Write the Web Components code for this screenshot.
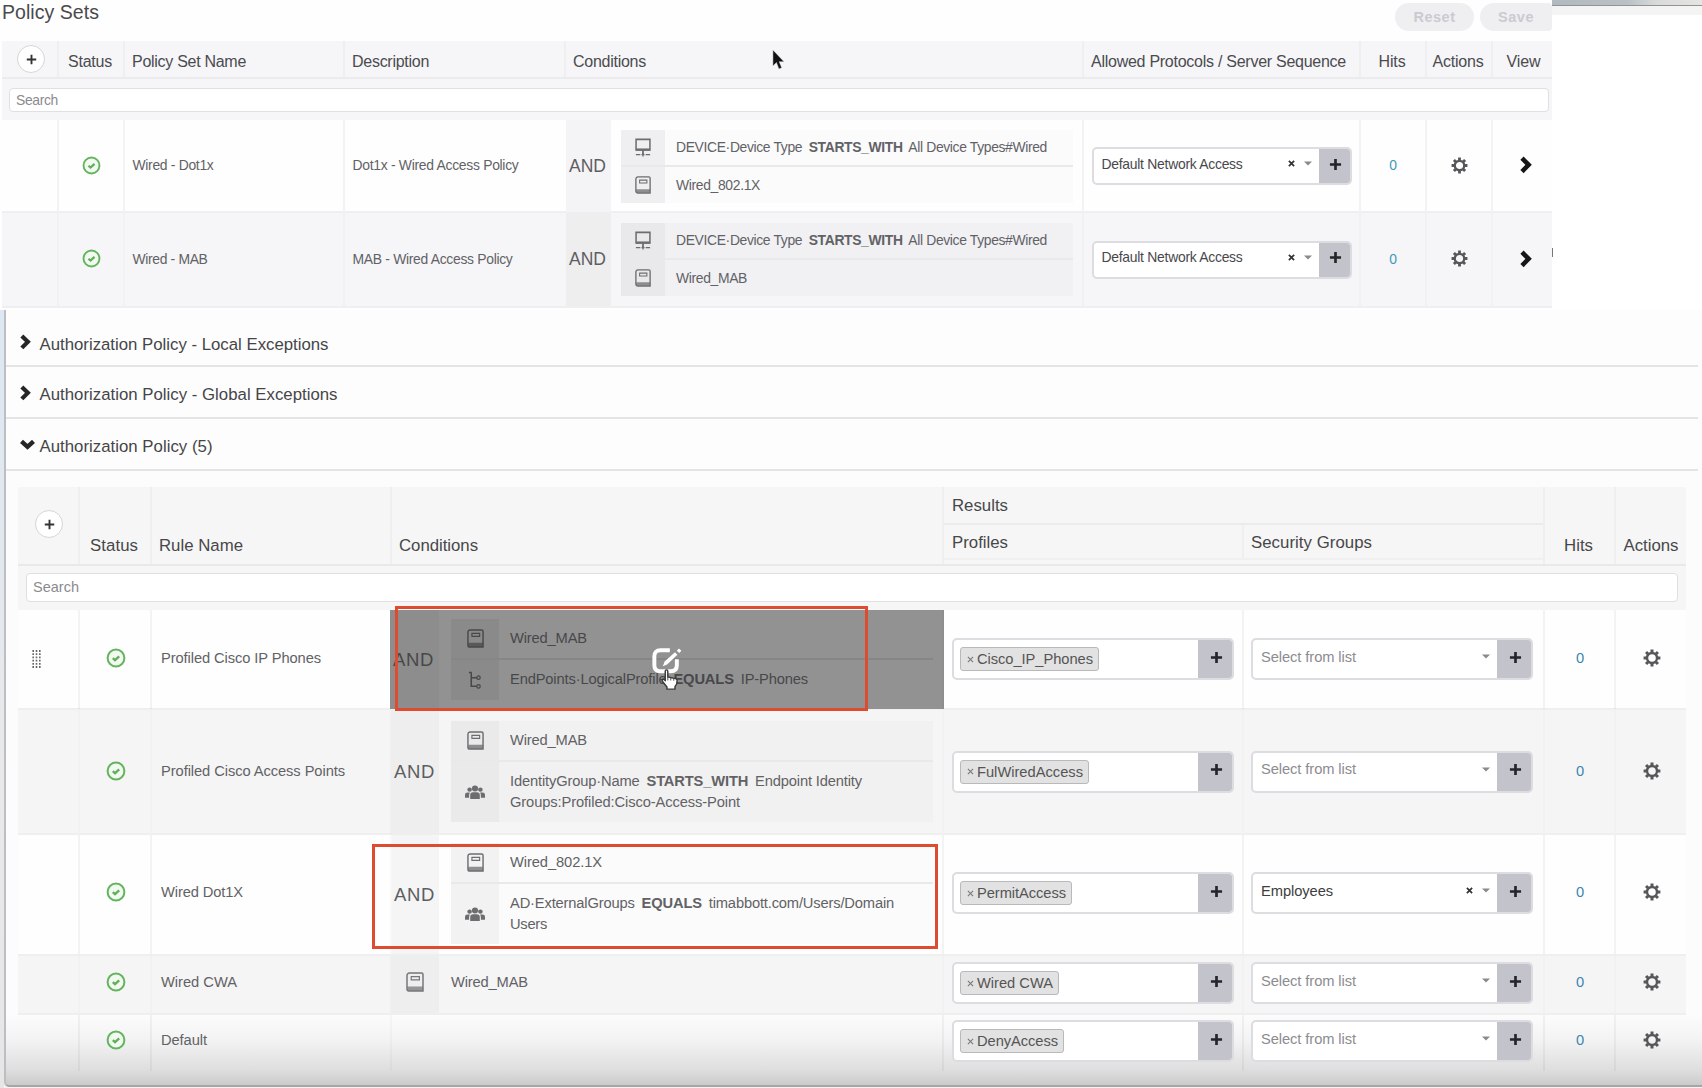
<!DOCTYPE html>
<html lang="en">
<head>
<meta charset="utf-8">
<title>Policy Sets</title>
<style>
html,body{margin:0;padding:0;background:#fff}
body{width:1702px;height:1088px;overflow:hidden;font-family:"Liberation Sans",Arial,sans-serif}
</style>
</head>
<body>
<policy-page></policy-page>
<script>
const fits = [];
const define = (name, render) => customElements.define(name, class extends HTMLElement {
  constructor() { super(); this.attachShadow({ mode: 'open' }); }
  connectedCallback() { if (!this.done) { this.done = true; this.shadowRoot.innerHTML = render(this); } }
});

/* Text whose tracking is adjusted to a given width in pixels */
customElements.define('fit-text', class extends HTMLElement {
  constructor() {
    super();
    this.attachShadow({ mode: 'open' }).innerHTML =
      '<style>:host{display:inline-block;white-space:pre;flex:none}::slotted(b){margin:0 3px}</style><slot></slot>';
  }
  connectedCallback() { fits.push(this); }
  fit() {
    const w = +this.getAttribute('w');
    if (w) this.style.letterSpacing = ((w - this.getBoundingClientRect().width) / this.textContent.length) + 'px';
  }
});
const F = (t, w) => `<fit-text w="${w}">${t}</fit-text>`;

const glyphs = {
  check: ['0 0 20 20', '<circle cx="10" cy="10" r="8.4" fill="#f1faef" stroke="#66b35f" stroke-width="2"/><path d="M6.8 10.2l2.2 2 4.2-3.900" fill="none" stroke="#66ab5f" stroke-width="2.300"/>'],
  gear: ['0 0 18 18', '<g fill="none" stroke="#56575a"><circle cx="9" cy="9" r="5" stroke-width="2.4"/><g stroke-width="3"><path d="M9 .6v2.8M9 14.6v2.8M.6 9h2.8M14.6 9h2.8M3.06 3.06l2 2M12.94 12.94l2 2M3.06 14.94l2-2M12.94 5.06l2-2"/></g></g>'],
  right: ['0 0 12 18', '<path d="M2 2.2l6.6 6.6L2 15.6" fill="none" stroke="currentColor" stroke-width="4.6"/>'],
  down: ['0 0 16 12', '<path d="M1.6 2.6l6.4 6L14.4 2.6" fill="none" stroke="currentColor" stroke-width="4.6"/>'],
  book: ['0 0 18 20', '<path d="M3.4 1h12.1a1.5 1.5 0 0 1 1.5 1.5V19H3a2 2 0 0 1-2-2V3.4A2.4 2.4 0 0 1 3.4 1z" fill="none" stroke="currentColor" stroke-width="1.5"/><path d="M1.5 14.6H17V19H3a2 2 0 0 1-2-2z" fill="currentColor" opacity=".75"/><path d="M5.2 4.6h8.2v3.2H5.2z" fill="none" stroke="currentColor" stroke-width="1.2"/>'],
  device: ['0 0 18 20', '<path d="M1.2 1.5h15.6v11H1.2z" fill="none" stroke="currentColor" stroke-width="1.7"/><path d="M1 11h16v2.3H1z" fill="currentColor"/><path d="M9 13v4" stroke="currentColor" stroke-width="2"/><path d="M1 17.5h5M7.3 17.5h3.4M12 17.5h5M9 16v3.6" stroke="currentColor" stroke-width="1.5"/>'],
  tree: ['0 0 18 20', '<path d="M2 1.5h3M4.5 1.5v14.5h6M4.5 7h6" fill="none" stroke="currentColor" stroke-width="1.6"/><circle cx="12.2" cy="7" r="1.8" fill="none" stroke="currentColor" stroke-width="1.3"/><circle cx="12.2" cy="16.2" r="1.8" fill="none" stroke="currentColor" stroke-width="1.3"/>'],
  people: ['0 0 20 16', '<g fill="currentColor"><circle cx="10" cy="3.7" r="3.1"/><circle cx="4.6" cy="5" r="2.3"/><circle cx="15.4" cy="5" r="2.3"/><path d="M5.2 15V10.600q0-3 3-3h3.600q3 0 3 3V15z"/><path d="M0 13.500v-3q0-2.500 2.500-2.500h2.400q-1 1.200-.8 5.500zM20 13.500v-3q0-2.500-2.500-2.500h-2.400q1 1.200.8 5.500z"/></g>'],
  plus: ['0 0 14 14', '<path d="M7 1v12M1 7h12" stroke="currentColor" stroke-width="var(--sw,2.900)"/>'],
  x: ['0 0 8 8', '<path d="M1 1l6 6M7 1L1 7" stroke="currentColor" stroke-width="var(--sw,2)"/>'],
  caret: ['0 0 8 6', '<path d="M0 .5h8L4 5.500z" fill="currentColor"/>'],
  drag: ['0 0 9 19', '<path d="M1.200 0v19M4.500 0v19M7.800 0v19" stroke="#666" stroke-width="1.600" stroke-dasharray="2 1.400"/>'],
  edit: ['0 0 32 30', '<path d="M19 2.500H9Q2.500 2.500 2.500 9v9.500Q2.500 25 9 25h11q6.500 0 6.500-6.500V12" fill="none" stroke="#fff" stroke-width="4.200"/><path d="M11.500 19.500l2-5L24.500 4.500l2.600 2.700-11 10.500z" fill="#fff"/><path d="M27.600 1.800l2.600 2.400" stroke="#fff" stroke-width="3.400"/>'],
  hand: ['0 0 20 24', '<path d="M5 2.500Q5 1 6.500 1T8 2.500V9l9 2q2 .5 2 2.500 0 4-2.500 6.500V23H7v-2.500L1.600 14Q.8 12 2.500 11.500L5 13z" fill="#fff" stroke="#3a3a3a" stroke-width="1.700"/><path d="M8 9v4M11.500 10v3M15 11v2.500" stroke="#555" stroke-width="1.200"/>'],
  arrow: ['0 0 13 20', '<path d="M1 0v16l3.800-3.500L7.500 19l3-1.300-2.700-6H13z" fill="#111" stroke="#ddd" stroke-width=".5"/>']
};
define('ui-icon', el => {
  const [box, body] = glyphs[el.getAttribute('name')];
  return `<style>:host{display:block;flex:none}svg{display:block;width:100%;height:100%;overflow:visible}</style>
  <svg viewBox="${box}" preserveAspectRatio="none">${body}</svg>`;
});
const I = (n, w, h, extra = '') => `<ui-icon name="${n}" style="width:${w}px;height:${h}px;${extra}"></ui-icon>`;

define('add-circle', () => `<style>:host{display:flex;width:26px;height:26px;border:1.500px solid #d6d6d8;border-radius:50%;background:#fff;color:#333;align-items:center;justify-content:center;--sw:2.400}</style>${I('plus', 11, 11)}`);

define('search-box', el => `<style>:host{display:flex;box-sizing:border-box;align-items:center;background:#fff;border:1.500px solid #e0e0e4;border-radius:4px;color:#8b8b8f}</style><slot></slot>`);

define('pill-button', () => `<style>:host{display:flex;align-items:center;justify-content:center;height:28px;border-radius:14px;background:#efeff2;color:#cbcbcf;font:bold 14.500px "Liberation Sans",Arial,sans-serif}</style><slot></slot>`);

/* Drop-down field with an add button at its end */
define('pick-field', el => {
  const chip = el.hasAttribute('chip'), clear = el.hasAttribute('clear');
  return `<style>
  :host{display:flex;box-sizing:border-box;border:2px solid #dcdce1;border-radius:5px;background:#fff;overflow:hidden}
  .v{flex:1;display:flex;align-items:center;padding:0 7px 5px 8px}
  .v.c{padding:0 0 0 6px}
  .sp{flex:1}
  .chip{box-sizing:border-box;height:24px;display:flex;align-items:center;gap:3px;padding:0 5px 0 6px;border:1.500px solid #b9b9bb;border-radius:3px;background:#e2e2e2;color:#555;--sw:1.200}
  .add{box-sizing:border-box;width:var(--add,34px);background:#c3c3cb;display:flex;align-items:center;justify-content:center;color:#25252a;padding:0 0 4px 1px;margin:-2px -2px -2px 0}
  </style>
  ${chip ? `<div class="v c"><div class="chip">${I('x', 7, 7, 'color:#777')}<slot></slot></div></div>`
  : `<div class="v"><slot></slot><span class="sp"></span>${clear ? I('x', 7, 7, 'color:#333;margin-right:9px') : ''}${I('caret', 8, 5, 'color:#8a8a8d')}</div>`}
  <div class="add">${I('plus', 13, 13)}</div>`;
});

/* AND-joined condition block */
define('cond-line', el => `<style>
  :host{display:flex;box-sizing:border-box}
  .i{width:var(--iw);background:var(--ic);display:flex;align-items:center;justify-content:center;color:var(--fg,#6d6d70)}
  .t{flex:1;display:flex;flex-direction:column;justify-content:center;align-items:flex-start;padding:0 0 1px 11px;line-height:var(--lh,20px);background:var(--bc)}
  </style><div class="i">${I(el.getAttribute('icon'), +el.getAttribute('iw') || 17, +el.getAttribute('ih') || 19)}</div><div class="t"><slot></slot></div>`);
define('cond-group', el => `<style>
  :host{display:flex;height:100%;width:100%}
  .and{width:var(--aw);background:var(--ac);display:flex;align-items:center;justify-content:center;font-size:var(--as,17.500px);color:var(--fg,#5e5e61);box-sizing:border-box;padding-right:2px}
  .b{flex:1;display:flex;flex-direction:column;margin:var(--m)}
  ::slotted(cond-line:first-of-type){border-bottom:2px solid var(--dv,#e9e9eb)}
  </style><div class="and"><fit-text w="${el.getAttribute('w')}">AND</fit-text></div><div class="b"><slot></slot></div>`);

define('section-bar', el => `<style>
  :host{display:flex;box-sizing:border-box;border-bottom:2px solid #e4e4e6;align-items:center;font-size:16.800px;color:#454548;background:#fdfdfd;padding:6px 0 0 14px}
  .i{width:19.500px;color:#262628}
  </style><div class="i">${el.hasAttribute('open') ? I('down', 15, 11, 'margin-top:-5px') : I('right', 11, 16, 'margin-top:-5px')}</div><slot></slot>`);

const topRow = (bg, h, name, nw, desc, dw, cond, cw, alt) => `
<div class="row ${alt}" style="height:${h}px;background:${bg}">
 <div class="c"></div><div class="c mid">${I('check', 19, 19)}</div>
 <div class="c p8">${F(name, nw)}</div><div class="c p8">${F(desc, dw)}</div>
 <div class="c" style="padding-bottom:0"><cond-group w="37">
   <cond-line icon="device" iw="16" ih="19" style="height:37px">${F('DEVICE·Device Type <b>STARTS_WITH</b> All Device Types#Wired', 371)}</cond-line>
   <cond-line icon="book" iw="16" ih="18" style="height:36px">${F(cond, cw)}</cond-line></cond-group></div>
 <div class="c p8" style="padding-bottom:0"><pick-field clear style="width:260px;height:38px;--add:33px;color:#48484b">${F('Default Network Access', 141)}</pick-field></div>
 <div class="c mid zero"><span>0</span></div><div class="c mid">${I('gear', 17, 17)}</div><div class="c mid" style="color:#161616;padding-left:7px">${I('right', 12, 18)}</div>
</div>`;

define('policy-sets', () => `<style>
:host{display:flex;flex-direction:column;width:1552px;height:310px;background:#fefefe;box-sizing:border-box;color:#626266;font-size:13.900px}
.title{height:41px;display:flex;align-items:flex-start;gap:6px;color:#4a4a4d;font-size:19.500px;padding-left:2px}
.title .t{flex:1;padding-top:1px}
pill-button{margin-top:3px}
.row,.head{display:grid;grid-template-columns:55px 66px 220px 221px 518px 277px 66px 66px 61px;margin-left:2px;box-sizing:border-box}
.head{height:38px;background:#f6f6f8;border-bottom:2px solid #ebebee;color:#4b4b4f;font-size:16px}
.c{display:flex;align-items:center;border-left:2px solid #f3f3f6;box-sizing:border-box;min-width:0}
.c:first-child,.head .c:first-child{border-left:0}
.head .c{padding-top:6px;border-left-color:#efeff2}
.mid{justify-content:center}.p8{padding-left:7.500px}
.row .c{padding-bottom:2px}
.row .c:nth-child(5){border-left:0;padding-left:2px}
.head .b{padding-right:2px}
.search{height:41px;margin-left:2px;background:#f6f6f8;padding:8.500px 3px 0 7px;box-sizing:border-box}
search-box{height:24px;padding-left:6px}
.row{border-bottom:2px solid #efeff1;--iw:44px;--aw:45px;--ac:#f4f4f6;--ic:#efeff1;--bc:#fbfbfc;--m:10px 9px 9px 10px}
.alt{--ac:#eeeeef;--ic:#e9e9eb;--bc:#f1f1f4}
.alt .c{border-left-color:#f1f1f4}
.zero{color:#4596bb}
</style>
<div class="title"><div class="t">${F('Policy Sets', 97)}</div><pill-button style="width:79px">${F('Reset', 42)}</pill-button><pill-button style="width:72px;border-radius:14px 4px 4px 14px">${F('Save', 36)}</pill-button></div>
<div class="head"><div class="c mid" style="padding:0 0 0 3px"><add-circle></add-circle></div><div class="c" style="padding-left:9px">${F('Status', 44)}</div><div class="c" style="padding-left:7px">${F('Policy Set Name', 114)}</div><div class="c" style="padding-left:7px">${F('Description', 77)}</div><div class="c" style="padding-left:7px">${F('Conditions', 73)}</div><div class="c" style="padding-left:7px">${F('Allowed Protocols / Server Sequence', 255)}</div><div class="c mid b">${F('Hits', 27)}</div><div class="c mid b">${F('Actions', 51)}</div><div class="c mid" style="padding-left:2px">${F('View', 34)}</div></div>
<div class="search"><search-box>${F('Search', 42)}</search-box></div>
${topRow('#fefefe', 93, 'Wired - Dot1x', 81, 'Dot1x - Wired Access Policy', 166, 'Wired_802.1X', 84, '')}
${topRow('#f6f6f8', 95, 'Wired - MAB', 75, 'MAB - Wired Access Policy', 160, 'Wired_MAB', 71, 'alt')}
`);

const authRow = o => `
<div class="row ${o.alt ? 'alt' : ''} ${o.last ? 'last' : ''}" style="height:${o.h}px;--pb:${o.pb || 0}px">
 <div class="c s" style="padding-left:14px">${o.drag ? I('drag', 9, 18) : ''}</div><div class="c s t mid">${I('check', 20, 20)}</div>
 <div class="c s t" style="padding-left:9px">${F(o.name, o.nw)}</div>
 <div class="c">${o.cond || ''}</div>
 <div class="c s" style="padding-left:8px"><pick-field chip>${F(o.prof, o.pw)}</pick-field></div>
 <div class="c s" style="padding-left:7px"><pick-field ${o.sec ? 'clear style="color:#3e3e40"' : 'style="color:#8c8c90"'}>${o.sec ? F(o.sec, 72) : F('Select from list', 95)}</pick-field></div>
 <div class="c s t mid zero"><span>0</span></div><div class="c s t mid" style="padding-left:2px">${I('gear', 18, 18)}</div>
</div>`;

define('authorization-table', () => `<style>
:host{display:flex;flex-direction:column;width:1668px;margin-left:12px;color:#626265;font-size:14.700px}
.head,.row{display:grid;grid-template-columns:60px 72px 240px 552px 300px 301px 71px 72px;box-sizing:border-box}
.head{height:79px;background:#f6f6f6;border-bottom:2px solid #e9e9ea;color:#474749;font-size:16.800px}
.c{display:flex;align-items:center;border-left:2px solid rgba(60,60,70,.055);box-sizing:border-box;min-width:0}
.head .c:first-child,.c:first-child{border-left:0}
.head .c{align-items:flex-end;padding-bottom:8px;border-left-color:#efeff0}
.head .grp{grid-column:span 2;display:grid;grid-template-columns:298px 301px;grid-template-rows:38px 35px;border-left:2px solid #efeff0;box-sizing:border-box}
.grp>div{display:flex;align-items:center;padding:1px 0 0 8px;box-sizing:border-box;border-bottom:2px solid #ebebec}
.grp .r{grid-column:span 2}
.grp .pf,.grp .sg{padding-top:3px;border-bottom-color:#f0f0f1}
.grp .sg{border-left:2px solid #efeff0;padding-left:7px}
.head .hb{padding-right:2px}
.search{height:44px;background:#f6f6f6;padding:7px 8px 0 8px;box-sizing:border-box}
search-box{height:29px;padding:0 0 2px 6px;font-size:14.500px}
.row{background:#fefefe;border-bottom:2px solid #efeff0;--iw:48px;--aw:47px;--as:18.500px;--ac:#f5f5f5;--ic:#f2f2f2;--bc:#fbfbfb;--lh:20.500px}
.alt{background:#f5f5f5;--ac:#eeeeee;--ic:#eaeaea;--bc:#f1f1f1}
.alt .c{border-left-color:#f2f2f3}
.row .c:nth-child(4){border-left-color:rgba(60,60,70,.03)}
.last{border-bottom:0;background:none}
.s{padding-bottom:var(--pb)}
.t{padding-bottom:calc(var(--pb) + 2px)}
.mid{justify-content:center}.row .mid{padding-left:1px}
pick-field{width:282px;height:42px;--add:36px}
.zero{color:#3c86b1}
.shade{display:flex;flex:1;height:99px;align-self:flex-start;background:#929292;margin:0 -2px 0 -2px;--aw:49px;--ac:#8d8d8d;--ic:#8a8a8a;--bc:#929292;--fg:#48484a;--dv:#868686;color:#48484a}
.one{width:47px;height:100%;background:#eee;display:flex;align-items:center;justify-content:center;color:#77777a;margin-right:12px;box-sizing:border-box;padding-right:1px}
</style>
<div class="head"><div class="c" style="align-items:center;padding:0 0 3px 17px"><add-circle></add-circle></div><div class="c" style="padding-left:10px">${F('Status', 48)}</div><div class="c" style="padding-left:7px">${F('Rule Name', 84)}</div><div class="c" style="padding-left:7px">${F('Conditions', 79)}</div>
<div class="grp"><div class="r">${F('Results', 56)}</div><div class="pf">${F('Profiles', 56)}</div><div class="sg">${F('Security Groups', 121)}</div></div>
<div class="c mid hb">${F('Hits', 29)}</div><div class="c mid">${F('Actions', 55)}</div></div>
<div class="search"><search-box>${F('Search', 46)}</search-box></div>
${authRow({ h: 100, pb: 1, drag: 1, name: 'Profiled Cisco IP Phones', nw: 160, prof: 'Cisco_IP_Phones', pw: 116,
  cond: `<div class="shade"><cond-group w="41" style="--m:9px 11px 9px 12px"><cond-line icon="book" style="height:41px">${F('Wired_MAB', 77)}</cond-line><cond-line icon="tree" style="height:40px">${F('EndPoints·LogicalProfile <b>EQUALS</b> IP-Phones', 298)}</cond-line></cond-group></div>` })}
${authRow({ h: 125, alt: 1, pb: 1, name: 'Profiled Cisco Access Points', nw: 184, prof: 'FulWiredAccess', pw: 106,
  cond: `<cond-group w="41" style="--m:11px 9px 12px 12px"><cond-line icon="book" style="height:41px">${F('Wired_MAB', 77)}</cond-line><cond-line icon="people" iw="20" ih="15" style="height:60px">${F('IdentityGroup·Name <b>STARTS_WITH</b> Endpoint Identity', 352)}${F('Groups:Profiled:Cisco-Access-Point', 230)}</cond-line></cond-group>` })}
${authRow({ h: 121, pb: 3, name: 'Wired Dot1X', nw: 82, prof: 'PermitAccess', pw: 89, sec: 'Employees',
  cond: `<cond-group w="41" style="--m:8px 9px 9px 12px"><cond-line icon="book" style="height:41px">${F('Wired_802.1X', 92)}</cond-line><cond-line icon="people" iw="20" ih="15" style="height:60px">${F('AD·ExternalGroups <b>EQUALS</b> timabbott.com/Users/Domain', 384)}${F('Users', 37)}</cond-line></cond-group>` })}
${authRow({ h: 59, alt: 1, pb: 3, name: 'Wired CWA', nw: 76, prof: 'Wired CWA', pw: 76,
  cond: `<div class="one">${I('book', 18, 20, 'margin-bottom:5px')}</div><div style="padding-bottom:5px">${F('Wired_MAB', 77)}</div>` })}
${authRow({ h: 56, last: 1, pb: 4, name: 'Default', nw: 46, prof: 'DenyAccess', pw: 81 })}
`);

define('policy-page', () => `<style>
:host{display:flex;flex-direction:column;width:1702px;height:1088px;position:relative}
.top{display:flex;height:310px}
.side{flex:1;display:flex;flex-direction:column}
.side i{display:block}
.g{height:5px;background:linear-gradient(90deg,#b2bac1,#b9c1c6 50%,#d9dbda 70%,#e5e5e3)}
.l{height:1px;background:#929494}.k{height:9px;background:#f4f4f4}
.low{display:flex;height:778px;background:#f3f3f3}
.edge{width:4px;background:linear-gradient(#dce8f3,#e4e8ee 35%,#e9e9ea 60%,#e6e6e6)}
.frame{box-sizing:border-box;width:1698px;height:777px;border-left:2px solid #bdbec2;border-bottom:2px solid #a6a6a6;border-radius:0 0 0 5px;display:flex;flex-direction:column;background:linear-gradient(#fcfcfc 0,#fcfcfc 705px,#f3f3f3 730px,#dedede 760px,#cbcbcb 775px)}
section-bar{width:1692px}
authorization-table{margin-top:16px}
.mark{position:absolute;box-sizing:border-box;border:3px solid #dd4b31}
.float{position:absolute}
</style>
<div class="top"><policy-sets></policy-sets><div class="side"><i class="g"></i><i class="l"></i><i class="k"></i></div></div>
<div class="low"><div class="edge"></div><div class="frame">
<section-bar style="height:57px;padding-top:14px">${F('Authorization Policy - Local Exceptions', 289)}</section-bar>
<section-bar style="height:52px">${F('Authorization Policy - Global Exceptions', 298)}</section-bar>
<section-bar open style="height:52px">${F('Authorization Policy (5)', 173)}</section-bar>
<authorization-table></authorization-table>
</div></div>
<div class="mark" style="left:395px;top:606px;width:473px;height:105px"></div>
<div class="mark" style="left:372px;top:844px;width:566px;height:105px"></div>
<div class="float" style="left:652px;top:648px">${I('edit', 30, 28)}</div>
<div class="float" style="left:661px;top:669px">${I('hand', 17, 21)}</div>
<div class="float" style="left:772px;top:50px">${I('arrow', 12, 20)}</div>
<div class="float" style="left:1552px;top:248px;width:1px;height:9px;background:#777"></div>
`);
fits.forEach(f => f.fit());
</script>
</body>
</html>
